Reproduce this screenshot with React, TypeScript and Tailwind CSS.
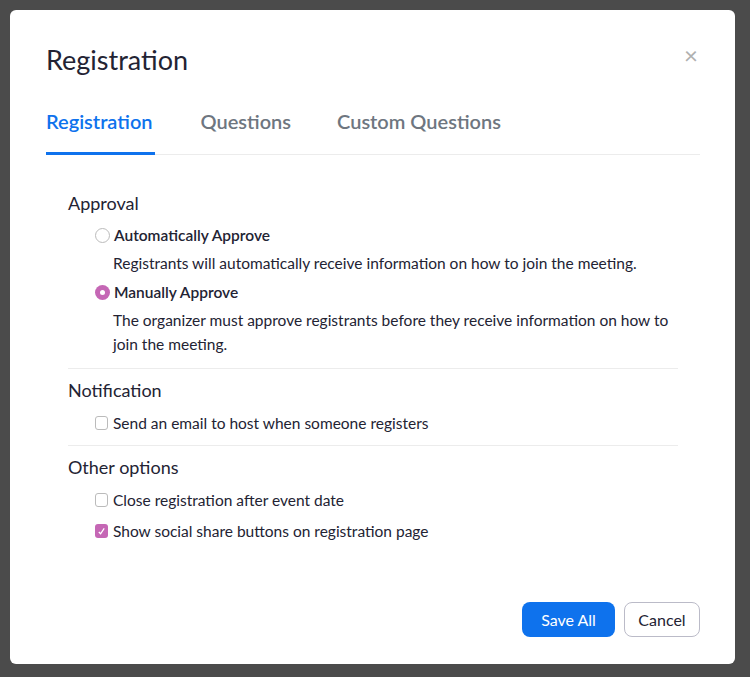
export default function App() {
  const f = { fontFamily: 'Lato, "Open Sans", sans-serif' };
  return (
    <div style={f} className="w-[750px] h-[677px] bg-[#4b4b4b] overflow-hidden relative">
      <div className="absolute left-[10px] top-[10px] w-[725px] h-[654px] bg-white rounded-[6px] pt-[33px] pl-[36px] pr-[35px] flex flex-col">
        <div className="flex items-start justify-between">
          <h1 className="text-[27px] leading-[34px] text-[#232333]">Registration</h1>
          <span className="text-[#b0b0b0] text-[24px] leading-none mt-[0px] mr-[2px]">×</span>
        </div>
        <div className="flex mt-[30px] border-b border-[#ececec]">
          <div className="pb-[17px] border-b-[3px] border-[#0e72ed] -mb-px text-[#0e72ed] text-[20px] font-semibold leading-[28px] pr-[2px]">Registration</div>
          <div className="ml-[46px] text-[#6e7680] text-[20px] font-semibold leading-[28px]">Questions</div>
          <div className="ml-[46px] text-[#6e7680] text-[20px] font-semibold leading-[28px]">Custom Questions</div>
        </div>
        <div className="mx-[22px] mt-[36px] text-[#232333]">
          <div className="text-[18px] leading-[24px]">Approval</div>
          <div className="ml-[27px] mt-[8px] flex items-center gap-[4px]">
            <span className="w-[15px] h-[15px] rounded-full border border-[#bbb]" />
            <span className="text-[15.5px] font-semibold leading-[24px]">Automatically Approve</span>
          </div>
          <div className="ml-[45px] mt-[4px] text-[15.5px] leading-[24px] text-[#232333]">Registrants will automatically receive information on how to join the meeting.</div>
          <div className="ml-[27px] mt-[5px] flex items-center gap-[4px]">
            <span className="w-[15px] h-[15px] rounded-full bg-[#c567b5] flex items-center justify-center"><span className="w-[5px] h-[5px] rounded-full bg-white" /></span>
            <span className="text-[15.5px] font-semibold leading-[24px]">Manually Approve</span>
          </div>
          <div className="ml-[45px] mt-[4px] text-[15.5px] leading-[24px] w-[580px]">The organizer must approve registrants before they receive information on how to join the meeting.</div>
          <div className="border-t border-[#ececec] mt-[12px] pt-[9px] text-[18px] leading-[24px]">Notification</div>
          <div className="ml-[27px] mt-[9px] flex items-center gap-[5px] text-[15.5px] leading-[24px]">
            <span className="w-[13px] h-[14px] rounded-[3px] border border-[#bbb]" />Send an email to host when someone registers
          </div>
          <div className="border-t border-[#ececec] mt-[10px] pt-[9px] text-[18px] leading-[24px]">Other options</div>
          <div className="ml-[27px] mt-[9px] flex items-center gap-[5px] text-[15.5px] leading-[24px]">
            <span className="w-[13px] h-[14px] rounded-[3px] border border-[#bbb]" />Close registration after event date
          </div>
          <div className="ml-[27px] mt-[7px] flex items-center gap-[5px] text-[15.5px] leading-[24px]">
            <span className="w-[13px] h-[14px] rounded-[3px] bg-[#c567b5] flex items-center justify-center">
              <svg width="9" height="9" viewBox="0 0 10 10"><path d="M2 5.5l2 2 4-6" stroke="#fff" strokeWidth="1.4" fill="none" /></svg>
            </span>Show social share buttons on registration page
          </div>
        </div>
        <div className="mt-auto mb-[27px] flex justify-end gap-[9px]">
          <button className="w-[93px] h-[35px] rounded-[8px] bg-[#0e72ed] text-white text-[16px]">Save All</button>
          <button className="w-[76px] h-[35px] rounded-[8px] border border-[#bbbbc8] text-[#232333] text-[16px]">Cancel</button>
        </div>
      </div>
    </div>
  );
}
